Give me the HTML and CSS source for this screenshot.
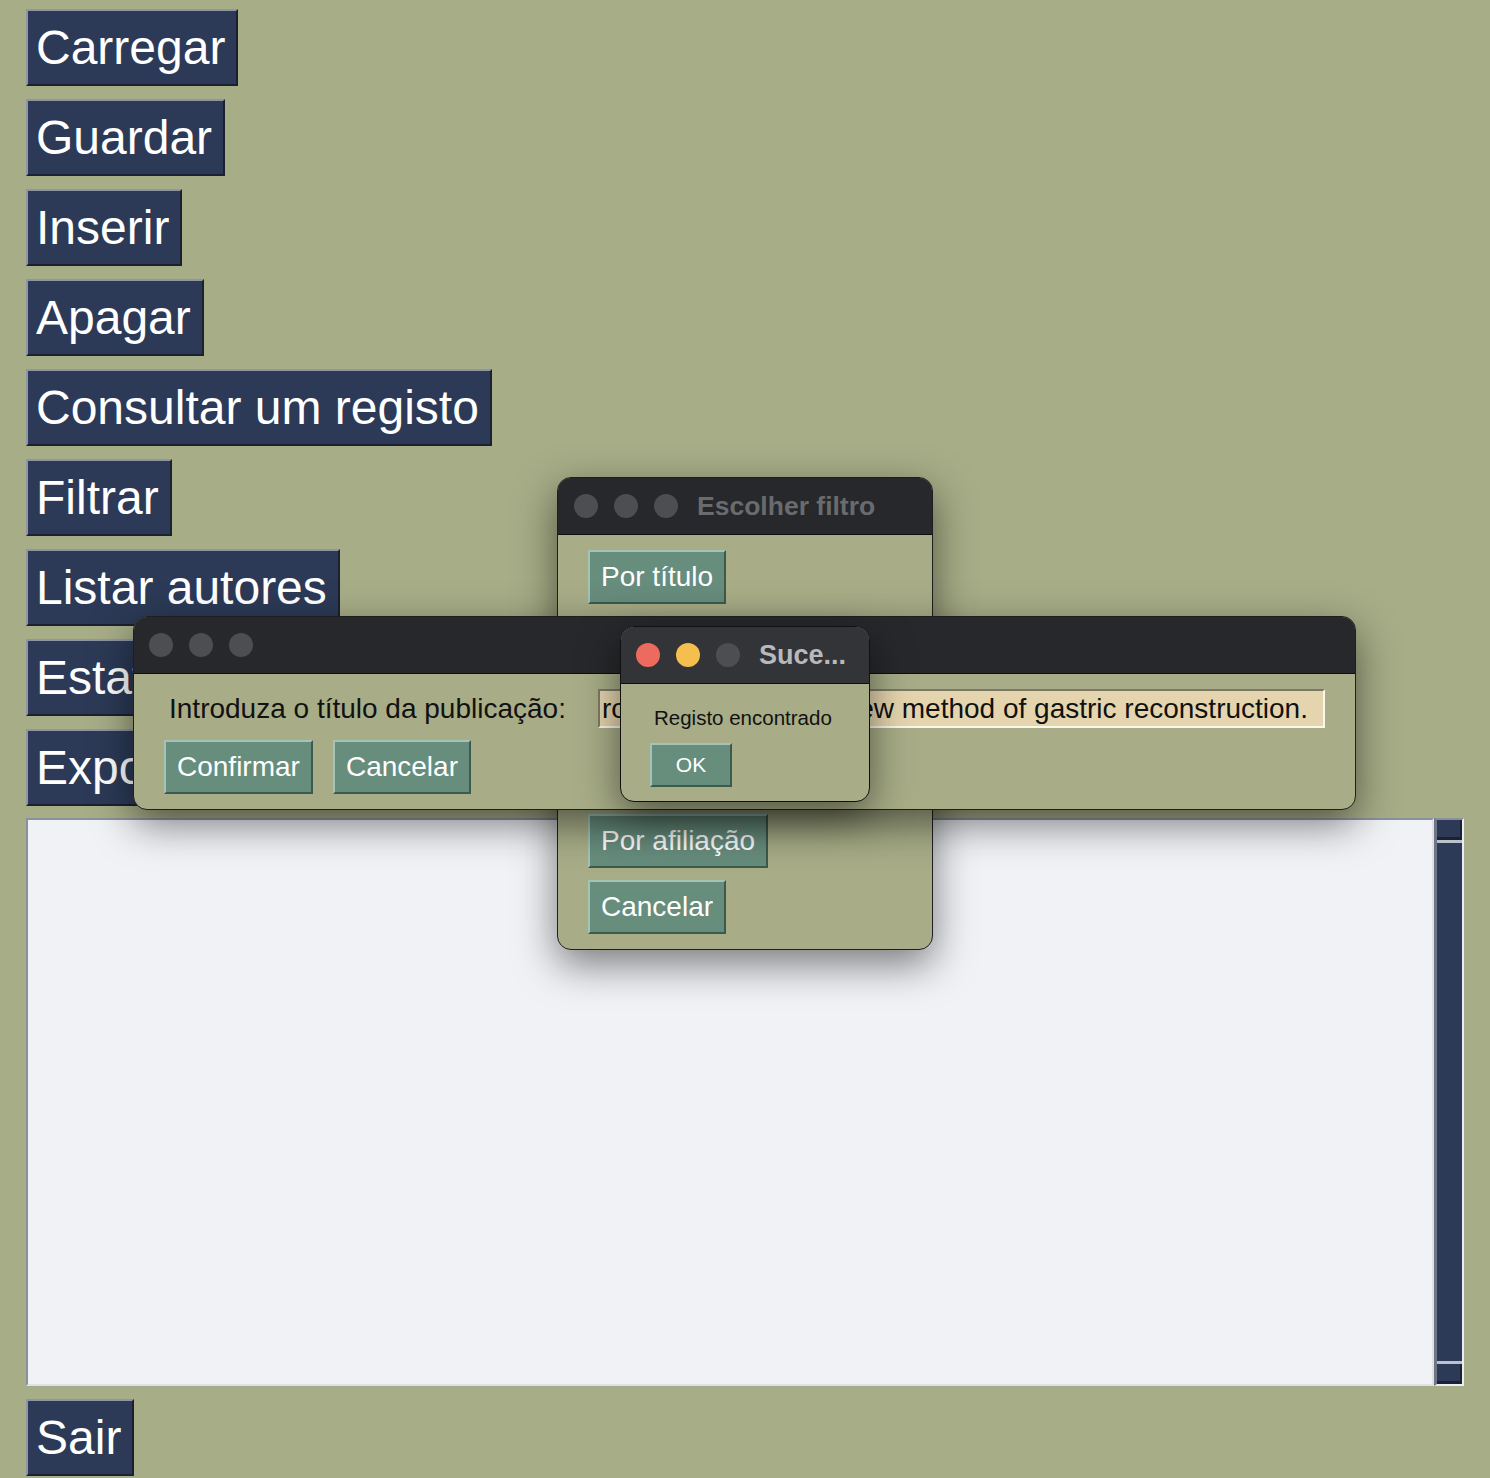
FILE: index.html
```html
<!DOCTYPE html>
<html lang="pt">

<head>
    <meta charset="UTF-8">
    <meta name="viewport" content="width=device-width, initial-scale=1.0">
    <title>Publicações</title>
    <link rel="stylesheet" href="styles.css">
</head>

<body>
    <div class="app">
        <button class="main-btn">Carregar</button>
        <button class="main-btn">Guardar</button>
        <button class="main-btn">Inserir</button>
        <button class="main-btn">Apagar</button>
        <button class="main-btn">Consultar um registo</button>
        <button class="main-btn">Filtrar</button>
        <button class="main-btn">Listar autores</button>
        <button class="main-btn">Estatísticas</button>
        <button class="main-btn">Exportar</button>

        <div class="output">
            <div class="output-text"></div>
            <div class="scrollbar">
                <div class="arrow"></div>
                <div class="track"></div>
                <div class="arrow"></div>
            </div>
        </div>

        <button class="main-btn">Sair</button>
    </div>

    <!-- janela do filtro -->
    <div class="window filter-win">
        <div class="titlebar">
            <span class="dot"></span>
            <span class="dot"></span>
            <span class="dot"></span>
            <span class="title">Escolher filtro</span>
        </div>
        <div class="win-body filter-body">
            <button class="dlg-btn">Por título</button>
            <button class="dlg-btn">Por autor</button>
            <button class="dlg-btn">Por palavra-chave</button>
            <button class="dlg-btn">Por data</button>
            <button class="dlg-btn">Por afiliação</button>
            <button class="dlg-btn">Cancelar</button>
        </div>
    </div>

    <!-- janela do titulo -->
    <div class="window input-win">
        <div class="titlebar">
            <span class="dot"></span>
            <span class="dot"></span>
            <span class="dot"></span>
        </div>
        <div class="win-body input-body">
            <div class="input-row">
                <label class="input-label">Introduza o título da publicação:</label>
                <div class="entry">roux-en-Y limb is a new method of gastric reconstruction.</div>
            </div>
            <div class="btn-row">
                <button class="dlg-btn">Confirmar</button>
                <button class="dlg-btn">Cancelar</button>
            </div>
        </div>
    </div>

    <!-- mensagem -->
    <div class="window msg-win">
        <div class="titlebar active">
            <span class="dot red"></span>
            <span class="dot yellow"></span>
            <span class="dot"></span>
            <span class="title">Suce...</span>
        </div>
        <div class="win-body msg-body">
            <p class="msg-text">Registo encontrado</p>
            <button class="dlg-btn small">OK</button>
        </div>
    </div>
</body>

</html>
```

FILE: styles.css
```css
body {
    margin: 0;
    padding: 0;
    background-color: #a7ad87;
    font-family: 'Liberation Sans', Arial, sans-serif;
    width: 1490px;
    height: 1478px;
    overflow: hidden;
    position: relative;
}

.app {
    display: flex;
    flex-direction: column;
    align-items: flex-start;
    gap: 13px;
    padding: 9px 26px 0;
}

.main-btn {
    height: 77px;
    padding: 0 11px 0 8px;
    background-color: #2c3a57;
    color: #fff;
    font-family: inherit;
    font-size: 48px;
    line-height: 1;
    border: 2px solid;
    border-color: #8e96a6 #1b2131 #1b2131 #8e96a6;
    white-space: nowrap;
}

.output {
    align-self: stretch;
    display: flex;
    height: 568px;
    margin-top: -1px;
}

.output-text {
    flex: 1;
    background: #f0f2f6;
    border: 2px solid;
    border-color: #8a919e #dfe3e8 #dfe3e8 #8a919e;
}

.scrollbar {
    width: 25px;
    display: flex;
    flex-direction: column;
    background: #2c3a57;
    border-left: 3px solid #6f7685;
    border-right: 2px solid #e8eef5;
    border-top: 2px solid #8a919e;
    border-bottom: 2px solid #e8eef5;
}

.scrollbar .arrow {
    height: 17px;
    border-right: 2px solid #1b2131;
    border-bottom: 3px solid #1b2131;
}

.scrollbar .track {
    flex: 1;
    border-top: 3px solid #b9c2cd;
    border-bottom: 3px solid #b9c2cd;
}

/* janelas */
.window {
    position: absolute;
    background: #a8ad87;
    border: 1px solid #1f1f20;
    border-radius: 14px;
    overflow: hidden;
    box-shadow: 0 14px 40px rgba(0, 0, 0, 0.5);
}

.titlebar {
    height: 56px;
    background: #27282b;
    border-bottom: 1px solid #0e0e0f;
    display: flex;
    align-items: center;
    gap: 16px;
    padding-left: 16px;
}

.titlebar.active {
    background: #333437;
}

.dot {
    width: 24px;
    height: 24px;
    border-radius: 50%;
    background: #4d4e51;
}

.dot.red {
    background: #ed6a5e;
}

.dot.yellow {
    background: #f5bf4f;
}

.title {
    margin-left: 3px;
    font-size: 26.5px;
    font-weight: bold;
    color: #6a6b6d;
    white-space: nowrap;
}

.titlebar.active .title {
    color: #b8b9bb;
    font-size: 27px;
}

.dlg-btn {
    height: 54px;
    padding: 0 11px;
    background-color: #678d7d;
    color: #fff;
    font-family: inherit;
    font-size: 28px;
    border: 2px solid;
    border-color: #a3c2b8 #3d5a4e #3d5a4e #a3c2b8;
    white-space: nowrap;
}

.dlg-btn.small {
    height: 44px;
    width: 82px;
    font-size: 21px;
}

.filter-win {
    left: 557px;
    top: 477px;
    width: 374px;
    height: 471px;
    z-index: 1;
}

.filter-body {
    display: flex;
    flex-direction: column;
    align-items: flex-start;
    gap: 12px;
    padding: 15px 30px;
}

.input-win {
    left: 133px;
    top: 616px;
    width: 1221px;
    height: 192px;
    z-index: 2;
}

.input-win .titlebar {
    padding-left: 15px;
}

.input-body {
    padding: 15px 30px;
    display: flex;
    flex-direction: column;
    gap: 12px;
}

.input-row {
    display: flex;
    align-items: center;
    gap: 32px;
    padding-left: 5px;
}

.input-label {
    font-size: 28px;
    color: #111;
    white-space: nowrap;
}

.entry {
    width: 722px;
    height: 35px;
    line-height: 35px;
    padding-left: 2px;
    font-size: 28px;
    color: #111;
    background: #e5d5ae;
    border: 2px solid;
    border-color: #7d7866 #fbf7ec #fbf7ec #7d7866;
    overflow: hidden;
    white-space: nowrap;
}

.btn-row {
    display: flex;
    gap: 20px;
}

.msg-win {
    left: 620px;
    top: 626px;
    width: 248px;
    height: 174px;
    z-index: 3;
    border-color: #111;
}

.msg-win .titlebar {
    padding-left: 15px;
}

.msg-body {
    padding: 0 18px 0 29px;
}

.msg-text {
    margin: 22px 0 13px 4px;
    font-size: 20.5px;
    color: #111;
    white-space: nowrap;
}
```
